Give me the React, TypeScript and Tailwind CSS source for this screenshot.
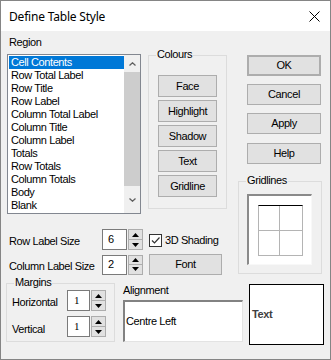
import React from "react";

const regions = [
    "Cell Contents",
    "Row Total Label",
    "Row Title",
    "Row Label",
    "Column Total Label",
    "Column Title",
    "Column Label",
    "Totals",
    "Row Totals",
    "Column Totals",
    "Body",
    "Blank",
];

const colourButtons = ["Face", "Highlight", "Shadow", "Text", "Gridline"];

function Btn({ label, className = "" }: { label: string; className?: string }) {
    return (
        <div className={`flex items-center justify-center bg-[#e1e1e1] border border-[#adadad] text-black ${className}`}>
            {label}
        </div>
    );
}

function Spin({ h }: { h: string }) {
    return (
        <div className={`flex flex-col w-[15px] ${h}`}>
            <div className="flex-1 flex items-center justify-center bg-[#e1e1e1] border border-[#adadad]">
                <svg width="7" height="4" viewBox="0 0 7 4"><path d="M0 4 L3.5 0 L7 4 Z" fill="#000" /></svg>
            </div>
            <div className="flex-1 flex items-center justify-center bg-[#e1e1e1] border border-t-0 border-[#adadad]">
                <svg width="7" height="4" viewBox="0 0 7 4"><path d="M0 0 L3.5 4 L7 0 Z" fill="#000" /></svg>
            </div>
        </div>
    );
}

function Group({ title, className = "", children }: { title: string; className?: string; children?: React.ReactNode }) {
    return (
        <div className={`relative border border-[#dcdcdc] ${className}`}>
            <span className="absolute -top-[8px] left-[7px] px-[1px] bg-[#f0f0f0] leading-[13px]">{title}</span>
            {children}
        </div>
    );
}

export default function App() {
    return (
        <div
            className="w-[331px] h-[360px] border border-[#858585] bg-[#f0f0f0] flex flex-col text-[11px] leading-[13px] tracking-[-0.4px] text-black overflow-hidden"
            style={{ fontFamily: '"Liberation Sans", Arial, sans-serif' }}
        >
            {/* title bar */}
            <div className="h-[30px] bg-white flex items-center justify-between pl-[8px] pr-[10px] shrink-0">
                <span className="text-[12px] leading-[16px] mt-[1px] tracking-[-0.2px]" style={{ fontFamily: '"Noto Sans", sans-serif' }}>
                    Define Table Style
                </span>
                <svg width="11" height="11" viewBox="0 0 11 11">
                    <path d="M0.5 0.5 L10.5 10.5 M10.5 0.5 L0.5 10.5" stroke="#000" strokeWidth="1" />
                </svg>
            </div>

            {/* top section */}
            <div className="flex">
                <div className="ml-[6px] w-[220px] flex flex-col">
                    <div className="mt-[5px] pl-[2px] h-[13px]">Region</div>
                    <div className="flex mt-[5px]">
                        {/* listbox */}
                        <div className="w-[134px] h-[160px] border border-[#828790] bg-white flex">
                            <ul className="flex-1 pl-[1px] pt-[1px]">
                                {regions.map((r, i) => (
                                    <li
                                        key={i}
                                        className={`h-[13px] pl-[2px] whitespace-nowrap ${i === 0 ? "bg-[#0078d7] text-white" : ""}`}
                                    >
                                        {r}
                                    </li>
                                ))}
                            </ul>
                            <div className="w-[16px] flex flex-col bg-[#f0f0f0]">
                                <div className="h-[17px] flex items-center justify-center">
                                    <svg width="7" height="4" viewBox="0 0 7 4"><path d="M0.5 3.5 L3.5 0.8 L6.5 3.5" stroke="#606060" strokeWidth="1.3" fill="none" /></svg>
                                </div>
                                <div className="h-[114px] bg-[#cdcdcd]" />
                                <div className="flex-1 flex items-center justify-center">
                                    <svg width="7" height="4" viewBox="0 0 7 4"><path d="M0.5 0.5 L3.5 3.2 L6.5 0.5" stroke="#606060" strokeWidth="1.3" fill="none" /></svg>
                                </div>
                            </div>
                        </div>
                        {/* colours */}
                        <Group title="Colours" className="ml-[7px] mt-[1px] w-[79px] h-[154px]">
                            <div className="flex flex-col gap-[3px] pl-[9px] pt-[19px]">
                                {colourButtons.map((c) => (
                                    <Btn key={c} label={c} className="w-[59px] h-[22px]" />
                                ))}
                            </div>
                        </Group>
                    </div>

                    {/* row label size */}
                    <div className="flex items-center mt-[15px] h-[21px]">
                        <div className="w-[95px] pl-[2px] mt-[3px]">Row Label Size</div>
                        <div className="w-[25px] h-[21px] border border-[#7a7a7a] bg-white pl-[5px] flex items-center">6</div>
                        <div className="ml-[1px]"><Spin h="h-[21px]" /></div>
                        <div className="ml-[6px] mt-[2px] w-[13px] h-[13px] border border-[#333] bg-white flex items-center justify-center">
                            <svg width="11" height="11" viewBox="0 0 11 11"><path d="M2 5.5 L4.5 8 L9.5 2.5" stroke="#333" strokeWidth="1.2" fill="none" /></svg>
                        </div>
                        <span className="ml-[3px] mt-[2px]">3D Shading</span>
                    </div>

                    {/* column label size */}
                    <div className="flex items-center mt-[4px] h-[21px]">
                        <div className="w-[95px] pl-[2px] mt-[3px]">Column Label Size</div>
                        <div className="w-[25px] h-[20px] border border-[#7a7a7a] bg-white pl-[5px] flex items-center">2</div>
                        <div className="ml-[1px]"><Spin h="h-[20px]" /></div>
                        <Btn label="Font" className="ml-[6px] w-[73px] h-[21px]" />
                    </div>
                </div>

                {/* right column */}
                <div className="ml-[11px] w-[84px] flex flex-col">
                    <Btn label="OK" className="ml-[9px] mt-[24px] w-[74px] h-[21px] border-2 border-[#0078d7]" />
                    <Btn label="Cancel" className="ml-[9px] mt-[8px] w-[74px] h-[21px]" />
                    <Btn label="Apply" className="ml-[9px] mt-[8px] w-[74px] h-[21px]" />
                    <Btn label="Help" className="ml-[9px] mt-[9px] w-[74px] h-[21px]" />
                    <Group title="Gridlines" className="mt-[17px] w-[84px] h-[93px]">
                        <div className="ml-[8px] mt-[12px] w-[65px] h-[71px] bg-white border-l-2 border-t-2 border-[#8a8a8a] border-r border-b border-r-[#f8f8f8] border-b-[#f8f8f8] flex justify-center pt-[9px]">
                            <div className="w-[45px] h-[51px] border border-[#b4b4b4] border-t-black grid grid-cols-2 grid-rows-2">
                                <div className="border-r border-b border-[#b4b4b4]" />
                                <div className="border-b border-[#b4b4b4]" />
                                <div className="border-r border-[#b4b4b4]" />
                                <div />
                            </div>
                        </div>
                    </Group>
                </div>
            </div>

            {/* bottom section */}
            <div className="flex mt-[8px]">
                <Group title="Margins" className="ml-[5px] w-[109px] h-[59px]">
                    <div className="flex flex-col pt-[6px]">
                        <div className="flex items-center h-[21px]">
                            <span className="w-[60px] pl-[5px] mt-[3px]">Horizontal</span>
                            <div className="w-[23px] h-[21px] border border-[#7a7a7a] bg-white pl-[6px] flex items-center" style={{ fontFamily: '"Liberation Serif", serif' }}>1</div>
                            <div className="ml-[1px]"><Spin h="h-[21px]" /></div>
                        </div>
                        <div className="flex items-center h-[21px] mt-[5px]">
                            <span className="w-[60px] pl-[5px] mt-[5px]">Vertical</span>
                            <div className="w-[23px] h-[21px] border border-[#7a7a7a] bg-white pl-[6px] flex items-center" style={{ fontFamily: '"Liberation Serif", serif' }}>1</div>
                            <div className="ml-[1px]"><Spin h="h-[21px]" /></div>
                        </div>
                    </div>
                </Group>

                <div className="ml-[8px] flex flex-col">
                    <div className="h-[13px] mt-[1px]">Alignment</div>
                    <div className="mt-[3px] w-[120px] h-[42px] bg-white border-l-2 border-t-2 border-[#828282] border-r border-b border-r-[#e3e3e3] border-b-[#e3e3e3] flex items-center pl-[1px]">
                        Centre Left
                    </div>
                </div>

                <div className="ml-[6px] mt-[1px] w-[75px] h-[61px] bg-white border border-black flex items-center pl-[2px] font-bold text-[#404040]">
                    Text
                </div>
            </div>
        </div>
    );
}
